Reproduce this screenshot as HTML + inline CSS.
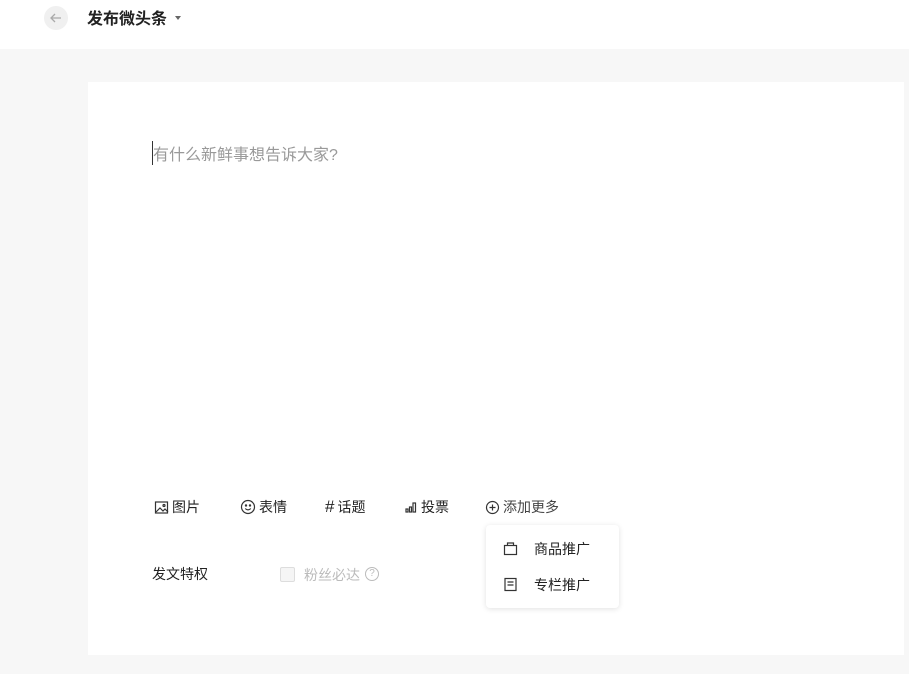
<!DOCTYPE html>
<html><head><meta charset="utf-8"><style>
*{margin:0;padding:0;box-sizing:border-box}
body{width:909px;height:674px;background:#f7f7f7;font-family:"Liberation Sans","Noto Sans CJK SC",sans-serif;position:relative;overflow:hidden;color:#222}
.top{position:absolute;left:0;top:0;width:909px;height:49px;background:#fff}
.back{position:absolute;left:44px;top:6px;width:24px;height:24px;border-radius:50%;background:#f0f0f0}
.title{position:absolute;left:87px;top:5px;font-size:16px;font-weight:bold;color:#222}
.caret{position:absolute;left:175px;top:16px;border:3.5px solid transparent;border-top:4px solid #666}
.card{position:absolute;left:88px;top:82px;width:816px;height:573px;background:#fff}
.ph{position:absolute;left:152px;top:141px;font-size:16px;color:#999;border-left:1px solid #333}
.t{position:absolute;font-size:14px;color:#222;top:497px;display:flex;align-items:center;gap:3px}
.t svg{stroke:#333;fill:none;stroke-width:1.2}
.lbl{position:absolute;left:152px;top:564px;font-size:14px;color:#222}
.cb{position:absolute;left:280px;top:567px;width:15px;height:15px;border:1px solid #ddd;background:#f5f5f5;border-radius:2px}
.fs{position:absolute;left:304px;top:565px;font-size:14px;color:#bbb}
.q{position:absolute;left:365px;top:567px;width:14px;height:14px;border:1px solid #bbb;border-radius:50%;font-size:10px;color:#bbb;text-align:center;line-height:12px}
.menu{position:absolute;left:486px;top:525px;width:133px;height:83px;background:#fff;border-radius:4px;box-shadow:0 1px 6px rgba(0,0,0,.12)}
.mi{position:absolute;left:48px;font-size:14px;color:#222}
.menu svg{position:absolute;left:17px;stroke:#333;fill:none;stroke-width:1.2}
</style></head><body>
<div class="top">
<div class="back"><svg width="24" height="24"><path d="M17 12H7M11 8l-4 4 4 4" stroke="#aaa" stroke-width="1.3" fill="none"/></svg></div>
<div class="title">发布微头条</div><div class="caret"></div>
</div>
<div class="card"></div>
<div class="ph">有什么新鲜事想告诉大家?</div>
<div class="t" style="left:154px"><svg width="15" height="15"><rect x="1.5" y="2" width="12" height="11"/><path d="M2 12l4-4 3 3 2-2 3 3"/><circle cx="10" cy="5.5" r="1"/></svg>图片</div>
<div class="t" style="left:240px"><svg width="16" height="16"><circle cx="8" cy="8" r="6.5"/><circle cx="6" cy="6.5" r=".6"/><circle cx="10" cy="6.5" r=".6"/><path d="M5.2 9.5q2.8 2.8 5.6 0"/></svg>表情</div>
<div class="t" style="left:325px"><span style="font-size:17px">#</span>话题</div>
<div class="t" style="left:405px"><svg width="13" height="15"><rect x="1" y="9" width="2" height="3"/><rect x="4.5" y="7" width="2" height="5"/><rect x="8" y="3" width="2.5" height="9"/></svg>投票</div>
<div class="t" style="left:485px;color:#444"><svg width="15" height="15"><circle cx="7.5" cy="7.5" r="6"/><path d="M7.5 4.5v6M4.5 7.5h6"/></svg>添加更多</div>
<div class="lbl">发文特权</div>
<div class="cb"></div><div class="fs">粉丝必达</div><div class="q">?</div>
<div class="menu">
<svg width="16" height="16" style="top:16px"><rect x="1.5" y="4.5" width="12" height="9"/><path d="M4.5 4.5V2h6v2.5"/></svg>
<div class="mi" style="top:14px">商品推广</div>
<svg width="16" height="16" style="top:52px"><rect x="2" y="1.5" width="11" height="12"/><path d="M4.5 5h6M4.5 8h6"/></svg>
<div class="mi" style="top:50px">专栏推广</div>
</div>
</body></html>
